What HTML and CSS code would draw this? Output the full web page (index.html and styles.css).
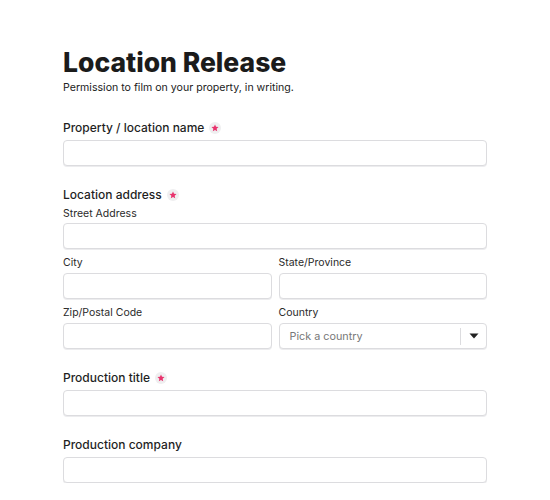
FILE: index.html
```html
<!DOCTYPE html>
<html>
<head>
<meta charset="utf-8">
<link rel="stylesheet" href="styles.css">
</head>
<body>
<main class="form">
  <h1 class="title">Location Release</h1>
  <p class="subtitle">Permission to film on your property, in writing.</p>

  <section class="field">
    <div class="label">Property / location name <span class="req"><svg width="8" height="8" viewBox="0 0 10 10"><path d="M5 0.6l1.3 2.9 3.1.3-2.35 2.1.7 3.1L5 7.4 2.25 9l.7-3.1L.6 3.8l3.1-.3z" fill="#e8336d"/></svg></span></div>
    <div class="input"></div>
  </section>

  <section class="field">
    <div class="label">Location address <span class="req"><svg width="8" height="8" viewBox="0 0 10 10"><path d="M5 0.6l1.3 2.9 3.1.3-2.35 2.1.7 3.1L5 7.4 2.25 9l.7-3.1L.6 3.8l3.1-.3z" fill="#e8336d"/></svg></span></div>
    <div class="sublabel first">Street Address</div>
    <div class="input"></div>
    <div class="grid">
      <div class="cell">
        <div class="sublabel">City</div>
        <div class="input"></div>
      </div>
      <div class="cell">
        <div class="sublabel">State/Province</div>
        <div class="input"></div>
      </div>
      <div class="cell">
        <div class="sublabel">Zip/Postal Code</div>
        <div class="input"></div>
      </div>
      <div class="cell">
        <div class="sublabel">Country</div>
        <div class="input select">
          <span class="placeholder">Pick a country</span>
          <span class="sep"></span>
          <svg class="caret" width="10" height="6" viewBox="0 0 10 6"><path d="M0.5 0.5h9L5 5.5z" fill="#222"/></svg>
        </div>
      </div>
    </div>
  </section>

  <section class="field">
    <div class="label">Production title <span class="req"><svg width="8" height="8" viewBox="0 0 10 10"><path d="M5 0.6l1.3 2.9 3.1.3-2.35 2.1.7 3.1L5 7.4 2.25 9l.7-3.1L.6 3.8l3.1-.3z" fill="#e8336d"/></svg></span></div>
    <div class="input"></div>
  </section>

  <section class="field">
    <div class="label">Production company</div>
    <div class="input"></div>
  </section>
</main>
</body>
</html>
```
FILE: styles.css
```css
html, body {
  margin: 0;
  padding: 0;
  background: #fff;
}
body {
  font-family: Inter, "Noto Sans", sans-serif;
  color: #1f1f1f;
}
.form {
  width: 424px;
  margin: 0 0 0 63px;
  padding-top: 46px;
}
.title {
  margin: 0;
  font-size: 26.5px;
  font-weight: 800;
  line-height: 32px;
  color: #1b1b1b;
}
.subtitle {
  margin: 3px 0 0;
  font-size: 10.6px;
  line-height: 14px;
  color: #222;
}
.field {
  margin-top: 25px;
}
.field + .field {
  margin-top: 21px;
}
.label {
  font-size: 12px;
  font-weight: 500;
  line-height: 16px;
  color: #1f1f1f;
  display: flex;
  align-items: center;
  margin-bottom: 4px;
}
.req {
  width: 12px;
  height: 12px;
  margin-left: 5px;
  border-radius: 50%;
  background: #efeff0;
  display: inline-flex;
  align-items: center;
  justify-content: center;
}
.sublabel {
  font-size: 10.5px;
  line-height: 14px;
  color: #2a2a2a;
  margin-bottom: 3px;
}
.sublabel.first {
  margin-top: 0;
  margin-bottom: 2px;
}
.input {
  height: 24px;
  border: 1px solid #dcdcdf;
  border-radius: 4px;
  box-shadow: 0 1px 0 #ececee;
  background: #fff;
}
.grid {
  display: grid;
  grid-template-columns: 1fr 1fr;
  column-gap: 7px;
  row-gap: 7px;
  margin-top: 7px;
}
.select {
  display: flex;
  align-items: center;
}
.placeholder {
  flex: 1;
  padding-left: 10px;
  font-size: 10.8px;
  color: #777;
}
.sep {
  width: 1px;
  height: 17px;
  background: #dcdcdf;
}
.caret {
  margin: 0 7px 0 8px;
}
```
